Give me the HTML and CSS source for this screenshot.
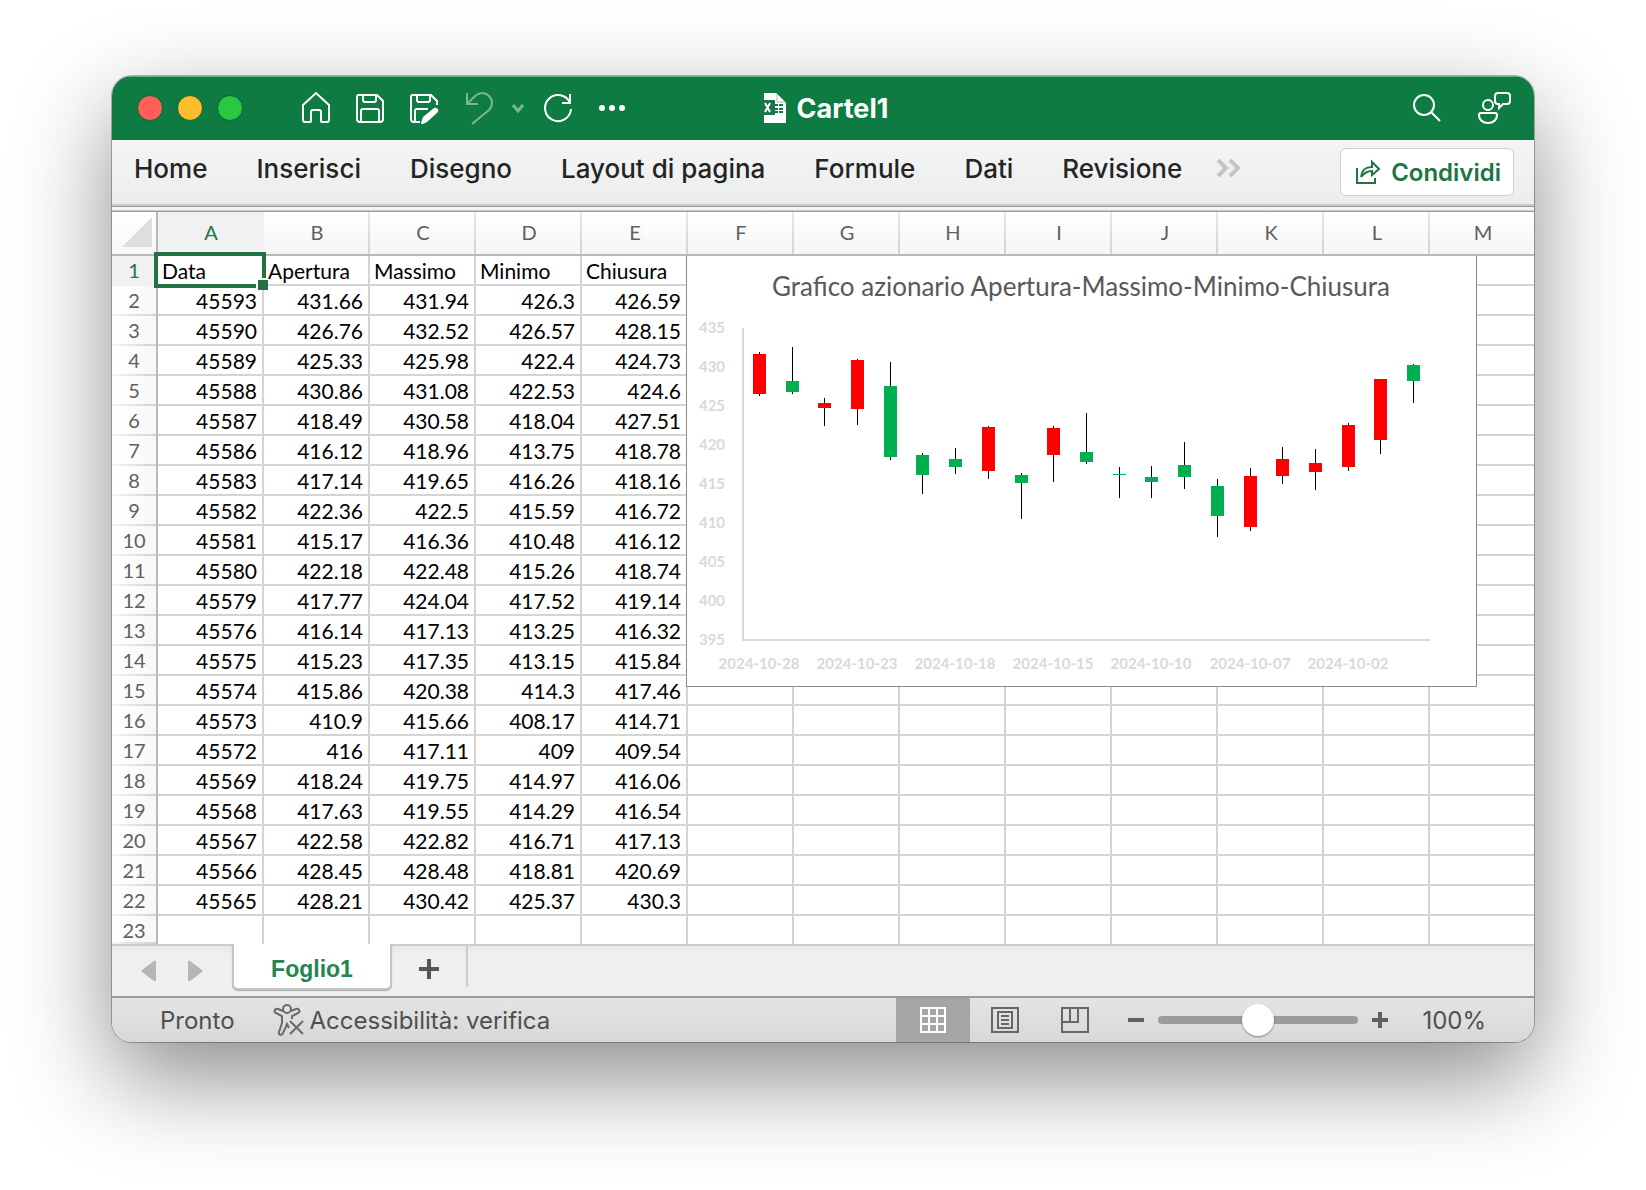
FILE: index.html
```html
<!DOCTYPE html>
<html lang="it">
<head>
  <meta charset="UTF-8" />
  <meta name="viewport" content="width=device-width, initial-scale=1.0"/>
  <title>Cartel1</title>
  <link rel="stylesheet" href="styles.css">
</head>
<body>

  <div class="window">
    <!-- Title bar -->
    <header class="titlebar">
      <div class="titlebar-left">
        <div class="lights">
          <button class="light red" aria-label="Chiudi"></button>
          <button class="light yellow" aria-label="Riduci a icona"></button>
          <button class="light green" aria-label="Schermo intero"></button>
        </div>
        <div class="quick-access">
          <button class="icon-button" aria-label="Home">
            <svg width="32" height="34" viewBox="0 0 32 34"><path d="M3 14 16 2l13 12v15a2 2 0 0 1-2 2h-5a1 1 0 0 1-1-1v-9a2 2 0 0 0-2-2h-6a2 2 0 0 0-2 2v9a1 1 0 0 1-1 1H5a2 2 0 0 1-2-2z"/></svg>
          </button>
          <button class="icon-button" aria-label="Salva">
            <svg width="32" height="34" viewBox="0 0 32 34"><path d="M5 4h18l6 6v18a3 3 0 0 1-3 3H6a3 3 0 0 1-3-3V6a2 2 0 0 1 2-2zM9 4v5a2 2 0 0 0 2 2h9a2 2 0 0 0 2-2V4M7 31V20a2 2 0 0 1 2-2h14a2 2 0 0 1 2 2v11"/></svg>
          </button>
          <button class="icon-button" aria-label="Salva con nome">
            <svg width="32" height="34" viewBox="0 0 32 34"><path d="M12 31H6a3 3 0 0 1-3-3V6a2 2 0 0 1 2-2h18l6 6v4M9 4v5a2 2 0 0 0 2 2h9a2 2 0 0 0 2-2V4M7 31V20a2 2 0 0 1 2-2h11"/><path class="solid" d="m13 32 2-6 11-9a3 3 0 0 1 4 4L19 31l-4 2c-1 0-2 0-2-1z"/></svg>
          </button>
          <button class="icon-button dimmed" aria-label="Annulla">
            <svg width="32" height="34" viewBox="0 0 32 34"><path d="M5 2v11h11M5 13l7-7c5-5 11-5 15-1s4 10 0 14L10 33"/></svg>
          </button>
          <button class="icon-button dimmed small" aria-label="Opzioni di annullamento">
            <svg width="14" height="34" viewBox="0 0 14 34"><path class="thick" d="m2 14 5 6 5-6"/></svg>
          </button>
          <button class="icon-button" aria-label="Ripeti">
            <svg width="32" height="34" viewBox="0 0 32 34"><path d="M28 12a13 13 0 1 0 1 6M28 3v9h-8"/></svg>
          </button>
          <button class="icon-button" aria-label="Altro">
            <svg width="32" height="34" viewBox="0 0 32 34"><g class="solid"><circle cx="6" cy="17" r="3"/><circle cx="16" cy="17" r="3"/><circle cx="26" cy="17" r="3"/></g></svg>
          </button>
        </div>
      </div>
      <div class="document-title">
        <svg width="28" height="32" viewBox="0 0 28 32">
          <path fill="#fff" d="M5 1h12l10 10v20H5z"/>
          <path fill="#d4dcd8" d="M17 1v8a2 2 0 0 0 2 2h8z"/>
          <path fill="#fff" d="M19 3v5a1 1 0 0 0 1 1h5z"/>
          <path stroke="#107c41" stroke-width="2" d="M16 13h3m1 0h4m-8 4h3m1 0h4m-8 3h3m1 0h4"/>
          <rect fill="#1d7445" x="1" y="8" width="15" height="15" rx="1"/>
          <path stroke="#fff" stroke-width="2" d="m6 11 5 9m0-9-5 9"/>
        </svg>
        <span>Cartel1</span>
      </div>
      <div class="titlebar-right">
        <button class="icon-button" aria-label="Cerca">
          <svg width="32" height="34" viewBox="0 0 32 34"><circle cx="13" cy="14" r="10"/><path d="m20 21 9 9"/></svg>
        </button>
        <button class="icon-button" aria-label="Presenza">
          <svg width="36" height="34" viewBox="0 0 36 34"><circle cx="12" cy="14" r="5"/><path d="M5 22h14a2 2 0 0 1 2 2c0 5-4 8-9 8s-9-3-9-8a2 2 0 0 1 2-2zM22 2h9a3 3 0 0 1 3 3v5a3 3 0 0 1-3 3h-4l-4 4v-4h-1a3 3 0 0 1-3-3V5a3 3 0 0 1 3-3z"/></svg>
        </button>
      </div>
    </header>

    <!-- Ribbon tabs -->
    <div class="ribbon">
      <nav class="ribbon-tabs">
        <button>Home</button>
        <button>Inserisci</button>
        <button>Disegno</button>
        <button>Layout di pagina</button>
        <button>Formule</button>
        <button>Dati</button>
        <button>Revisione</button>
        <button class="more-tabs" aria-label="Altre schede">
          <svg width="26" height="20" viewBox="0 0 26 20"><path d="m3 2 8 8-8 8M15 2l8 8-8 8"/></svg>
        </button>
      </nav>
      <button class="share-button">
        <svg width="26" height="26" viewBox="0 0 26 26"><path d="M2 9v15h18v-5M6 18c1-7 4-10 11-10V3l7 7-7 6v-4c-5 0-8 2-11 6z"/></svg>
        Condividi
      </button>
    </div>
    <div class="ribbon-edge"></div>

    <!-- Worksheet -->
    <main class="sheet">
      <table class="grid">
        <colgroup id="gridCols"></colgroup>
        <thead>
          <tr id="gridHead"></tr>
        </thead>
        <tbody id="gridBody"></tbody>
      </table>
      <div class="selection"></div>
      <svg class="chart" id="chart" width="789" height="430" viewBox="0 0 789 430"></svg>
    </main>

    <!-- Sheet tabs -->
    <div class="sheet-tabs">
      <div class="tab-arrows">
        <button aria-label="Foglio precedente"><svg width="16" height="22" viewBox="0 0 16 22"><path d="M15 2v18q0 2-2 1L1 12q-1-1 0-2L13 1q2-1 2 1z"/></svg></button>
        <button aria-label="Foglio successivo"><svg width="16" height="22" viewBox="0 0 16 22"><path d="M1 2v18q0 2 2 1l12-9q1-1 0-2L3 1Q1 0 1 2z"/></svg></button>
      </div>
      <button class="active-tab">Foglio1</button>
      <button class="add-tab" aria-label="Nuovo foglio"><svg width="20" height="20" viewBox="0 0 20 20"><path d="M10 0v20M0 10h20"/></svg></button>
    </div>

    <!-- Status bar -->
    <footer class="statusbar">
      <span>Pronto</span>
      <button class="accessibility">
        <svg width="32" height="32" viewBox="0 0 32 32"><circle cx="14" cy="5" r="4"/><path d="M10 7 5 5C2 4 0 8 3 9l6 3v7L6 28c-1 3 3 4 4 1l4-9 2 4M18 7l5-2c3-1 5 3 2 4l-6 3v3M17 17l13 13M30 17 17 30"/></svg>
        Accessibilità: verifica
      </button>
      <div class="views">
        <button class="current" aria-label="Normale"><svg width="30" height="28" viewBox="0 0 30 28"><path d="M3 2h24v24H3zM11 2v24M19 2v24M3 10h24M3 18h24"/></svg></button>
        <button aria-label="Layout di pagina"><svg width="30" height="28" viewBox="0 0 30 28"><path d="M2 2h26v24H2zM8 6h14v16H8zM11 10h8M11 14h8M11 18h8"/></svg></button>
        <button aria-label="Anteprima interruzioni"><svg width="30" height="28" viewBox="0 0 30 28"><path d="M2 2h26v24H2zM2 16h16V2M10 2v14"/></svg></button>
      </div>
      <div class="zoom">
        <button aria-label="Riduci zoom"><svg width="16" height="16" viewBox="0 0 16 16"><path d="M0 8h16"/></svg></button>
        <input type="range" min="0" max="100" value="50" aria-label="Zoom">
        <button aria-label="Aumenta zoom"><svg width="16" height="16" viewBox="0 0 16 16"><path d="M0 8h16M8 0v16"/></svg></button>
        <span class="zoom-value">100%</span>
      </div>
    </footer>
  </div>

  <script src="script.js"></script>
</body>
</html>
```

FILE: styles.css
```css
* {
  box-sizing: border-box;
}
body {
  font-family: Inter, sans-serif;
  margin: 0;
  padding: 76px 112px 148px;
  background-color: #fff;
}
button {
  font: inherit;
  color: inherit;
  background: none;
  border: none;
  padding: 0;
}
svg {
  display: block;
  fill: none;
}
.window {
  border-radius: 20px;
  overflow: hidden;
  background-color: #fff;
  box-shadow: 0 0 0 1px rgba(0, 0, 0, 0.28), 0 36px 96px rgba(0, 0, 0, 0.46);
}

/* Title bar */
.titlebar {
  display: grid;
  grid-template-columns: 1fr auto 1fr;
  align-items: center;
  height: 64px;
  padding: 0 22px 0 25px;
  background-color: #0e7c42;
  box-shadow: inset 0 1px #6fae89;
  color: #fff;
}
.titlebar-left, .lights, .quick-access, .titlebar-right, .document-title {
  display: flex;
  align-items: center;
}
.titlebar-left {
  gap: 57px;
}
.lights {
  gap: 14px;
}
.light {
  width: 26px;
  height: 26px;
  border-radius: 50%;
  border: 1px solid #0b6435;
}
.light.red {
  background-color: #ff5f57;
}
.light.yellow {
  background-color: #febc2e;
}
.light.green {
  background-color: #28c840;
}
.quick-access {
  gap: 22px;
}
.icon-button svg {
  stroke: #fff;
  stroke-width: 2;
}
.icon-button .solid {
  fill: #fff;
  stroke: none;
}
.icon-button .thick {
  stroke-width: 3;
}
.icon-button.dimmed {
  opacity: 0.45;
}
.icon-button.small {
  margin: 0 -5px;
}
.document-title {
  gap: 10px;
  padding-right: 2px;
  font-size: 27px;
  font-weight: 700;
}
.titlebar-right {
  justify-content: flex-end;
  gap: 33px;
}

/* Ribbon */
.ribbon {
  display: flex;
  justify-content: space-between;
  align-items: flex-start;
  height: 64px;
  padding: 8px 20px 0 22px;
  background: linear-gradient(#f4f4f4, #eceeed);
}
.ribbon-tabs {
  display: flex;
  align-items: center;
  gap: 49px;
  height: 40px;
  font-size: 26px;
  font-weight: 500;
  color: #242424;
  white-space: nowrap;
}
.more-tabs {
  margin-left: -16px;
}
.more-tabs svg {
  stroke: #c4c4c4;
  stroke-width: 4;
}
.share-button {
  display: flex;
  align-items: center;
  gap: 10px;
  height: 48px;
  padding: 0 12px 0 14px;
  background-color: #fff;
  border: 1px solid #cfcfcf;
  border-radius: 6px;
  color: #217346;
  font-size: 24px;
  font-weight: 600;
}
.share-button svg {
  stroke: #217346;
  stroke-width: 2;
}
.ribbon-edge {
  height: 8px;
  background-color: #f4f4f4;
  border-top: 2px solid #cacaca;
  border-bottom: 1px solid #999;
  box-shadow: inset 0 1px #999, inset 0 -1px #cacaca;
}

/* Worksheet grid */
.sheet {
  position: relative;
  overflow: hidden;
  font-family: Lato, sans-serif;
  font-size: 20px;
}
.grid {
  table-layout: fixed;
  width: 1424px;
  border-collapse: separate;
  border-spacing: 0;
}
.col-index {
  width: 46px;
}
.col-cell {
  width: 106px;
}
.grid th, .grid td {
  height: 30px;
  padding: 0 4px;
  line-height: 28px;
  white-space: nowrap;
}
.grid td {
  padding: 2px 5px 0 4px;
  border-right: 2px solid #d4d4d4;
  border-bottom: 2px solid #d4d4d4;
  text-align: right;
  font-size: 21px;
  line-height: 26px;
  color: #000;
}
.grid td.label {
  text-align: left;
}
.grid th {
  padding-bottom: 2px;
  color: #606060;
  font-weight: 400;
}
.grid thead th {
  height: 44px;
  border-bottom: 2px solid #b9b9b9;
  background: linear-gradient(#e9e9e9, #d2d2d2) right / 2px 100% no-repeat, linear-gradient(#fff, #f5f5f5);
}
.grid tbody th {
  border-right: 2px solid #b9b9b9;
  background: linear-gradient(90deg, #f4f4f4, #d2d2d2) bottom / 100% 2px no-repeat, linear-gradient(90deg, #fff, #f7f7f7);
}
.grid thead .corner {
  border-right: 2px solid #b9b9b9;
  background: linear-gradient(#fff, #f7f7f7);
}
.corner svg {
  margin-left: 6px;
  fill: #dedede;
}
.grid thead .selected, .grid tbody .selected {
  background: #f1f1f1;
  color: #217346;
}
.grid tbody tr:last-child th, .grid tbody tr:last-child td {
  height: 28px;
  padding-bottom: 0;
  border-bottom: none;
}
.selection {
  position: absolute;
  left: 42px;
  top: 40px;
  width: 112px;
  height: 36px;
  border: 4px solid #217346;
}
.selection::after {
  content: "";
  position: absolute;
  right: -6px;
  bottom: -6px;
  width: 10px;
  height: 10px;
  background-color: #217346;
  box-shadow: -1px -1px 0 1px #fff;
}

/* Stock chart */
.chart {
  position: absolute;
  left: 574px;
  top: 44px;
  box-sizing: content-box;
  background-color: #fff;
  border: 1px solid #8a8a8a;
  border-top: none;
}
.chart-title {
  font-size: 26px;
  fill: #595959;
  text-anchor: middle;
}
.axis-label {
  font-size: 15px;
  font-weight: 700;
  fill: #d9d9d9;
  text-anchor: middle;
}
.axis-line {
  stroke: #d9d9d9;
  stroke-width: 2;
}
.wick {
  stroke: #000;
}
.body-up {
  fill: #00b050;
}
.body-down {
  fill: #f00;
}

/* Sheet tabs */
.sheet-tabs {
  display: flex;
  align-items: flex-start;
  height: 52px;
  padding-left: 29px;
  background: linear-gradient(#e6e8e8, #eef0f0 8px);
  border-top: 2px solid #cccece;
}
.tab-arrows {
  display: flex;
  gap: 30px;
  width: 91px;
  padding-top: 14px;
}
.tab-arrows svg {
  fill: #b5b5b5;
}
.active-tab {
  width: 160px;
  height: 46px;
  margin-top: -2px;
  padding-top: 6px;
  background-color: #fff;
  border: 2px solid #c4c6c6;
  border-top: none;
  border-radius: 0 0 6px 6px;
  box-shadow: 0 1px 1px #aaa;
  color: #25854f;
  font-family: "Liberation Sans", sans-serif;
  font-size: 23px;
  font-weight: 700;
}
.add-tab {
  display: flex;
  justify-content: center;
  width: 76px;
  height: 41px;
  padding: 13px 0 0;
  border-right: 2px solid #ccc;
}
.add-tab svg {
  stroke: #555;
  stroke-width: 4;
}

/* Status bar */
.statusbar {
  display: flex;
  align-items: center;
  height: 46px;
  padding: 0 48px;
  background: linear-gradient(#e4e4e4, #d8d8d8);
  border-top: 2px solid #9c9c9c;
  color: #4f4f4f;
  font-size: 24px;
}
.accessibility {
  display: flex;
  align-items: center;
  gap: 5px;
  margin-left: 38px;
}
.accessibility svg {
  stroke: #6a6a6a;
  stroke-width: 2;
}
.views {
  display: flex;
  align-self: stretch;
  margin-left: auto;
}
.views button {
  display: flex;
  align-items: center;
  justify-content: center;
  width: 70px;
}
.views svg {
  stroke: #666;
  stroke-width: 2;
}
.views .current {
  width: 74px;
  background-color: #a5a5a5;
}
.views .current svg {
  stroke: #fff;
}
.zoom {
  display: flex;
  align-items: center;
  gap: 14px;
  margin-left: 18px;
}
.zoom svg {
  stroke: #606060;
  stroke-width: 4;
}
.zoom input {
  appearance: none;
  width: 200px;
  height: 32px;
  margin: 0;
  background: none;
}
.zoom input::-webkit-slider-runnable-track {
  height: 8px;
  border-radius: 4px;
  background-color: #9b9b9b;
}
.zoom input::-webkit-slider-thumb {
  appearance: none;
  width: 32px;
  height: 32px;
  margin-top: -12px;
  border-radius: 50%;
  background-color: #fff;
  box-shadow: 0 1px 2px rgba(0, 0, 0, 0.4);
}
.zoom-value {
  margin-left: 20px;
}
```

FILE: script.js
```js
const headings = ['Data', 'Apertura', 'Massimo', 'Minimo', 'Chiusura'];
const columns = 'ABCDEFGHIJKLM'.split('');

// serial date, open, high, low, close
const rows = [
  [45593, 431.66, 431.94, 426.3, 426.59],
  [45590, 426.76, 432.52, 426.57, 428.15],
  [45589, 425.33, 425.98, 422.4, 424.73],
  [45588, 430.86, 431.08, 422.53, 424.6],
  [45587, 418.49, 430.58, 418.04, 427.51],
  [45586, 416.12, 418.96, 413.75, 418.78],
  [45583, 417.14, 419.65, 416.26, 418.16],
  [45582, 422.36, 422.5, 415.59, 416.72],
  [45581, 415.17, 416.36, 410.48, 416.12],
  [45580, 422.18, 422.48, 415.26, 418.74],
  [45579, 417.77, 424.04, 417.52, 419.14],
  [45576, 416.14, 417.13, 413.25, 416.32],
  [45575, 415.23, 417.35, 413.15, 415.84],
  [45574, 415.86, 420.38, 414.3, 417.46],
  [45573, 410.9, 415.66, 408.17, 414.71],
  [45572, 416, 417.11, 409, 409.54],
  [45569, 418.24, 419.75, 414.97, 416.06],
  [45568, 417.63, 419.55, 414.29, 416.54],
  [45567, 422.58, 422.82, 416.71, 417.13],
  [45566, 428.45, 428.48, 418.81, 420.69],
  [45565, 428.21, 430.42, 425.37, 430.3]
];

// 1) Grid
document.getElementById('gridCols').innerHTML =
  '<col class="col-index">' + '<col class="col-cell">'.repeat(columns.length);

document.getElementById('gridHead').innerHTML =
  '<th class="corner"><svg width="30" height="30" viewBox="0 0 30 30"><path d="M30 0v30H0z"/></svg></th>' +
  columns.map((c, i) => `<th scope="col" class="${i === 0 ? 'selected' : ''}">${c}</th>`).join('');

let body = '';
[headings, ...rows, []].forEach((row, r) => {
  body += `<tr><th scope="row" class="${r === 0 ? 'selected' : ''}">${r + 1}</th>`;
  columns.forEach((_, c) => {
    body += `<td class="${r === 0 ? 'label' : ''}">${row[c] === undefined ? '' : row[c]}</td>`;
  });
  body += '</tr>';
});
document.getElementById('gridBody').innerHTML = body;

// 2) Chart
const plot = { left: 56, right: 743, bottom: 384, min: 395, max: 435, unit: 7.8 };
const y = value => Math.round(plot.bottom - (value - plot.min) * plot.unit);
const step = (plot.right - plot.left) / rows.length;

function isoDate(serial) {
  return new Date(Date.UTC(1899, 11, 30 + serial)).toISOString().slice(0, 10);
}

let svg = '<text class="chart-title" x="394" y="40">Grafico azionario Apertura-Massimo-Minimo-Chiusura</text>';
for (let v = plot.min; v <= plot.max; v += 5) {
  svg += `<text class="axis-label" x="25" y="${y(v) + 5}">${v}</text>`;
}
svg += `<path class="axis-line" d="M${plot.left} ${y(plot.max)}V${plot.bottom}H${plot.right}"/>`;

rows.forEach(([date, open, high, low, close], i) => {
  const x = Math.floor(plot.left + (i + 0.5) * step);
  const top = y(Math.max(open, close));
  const height = Math.max(1, y(Math.min(open, close)) - top);
  svg += `<path class="wick" d="M${x + 0.5} ${y(high)}V${y(low)}"/>`;
  svg += `<rect class="${close < open ? 'body-down' : 'body-up'}" x="${x - 6}" y="${top}" width="13" height="${height}"/>`;
  if (i % 3 === 0 && i < 20) {
    svg += `<text class="axis-label" x="${x}" y="413">${isoDate(date)}</text>`;
  }
});
document.getElementById('chart').innerHTML = svg;
```
